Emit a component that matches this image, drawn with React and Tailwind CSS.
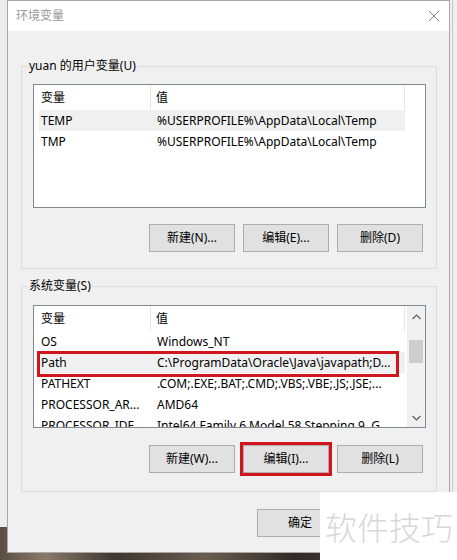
import React from "react";

const FONT = { fontFamily: '"Noto Sans", "Noto Sans CJK SC", sans-serif' };

function Btn({ children, className = "" }) {
  return (
    <div
      className={
        "w-[86px] h-[28px] flex items-center justify-center bg-[#e1e1e1] border border-[#adadad] text-[12px] text-black " +
        className
      }
    >
      {children}
    </div>
  );
}

function Header() {
  return (
    <div className="flex h-[25px] w-[371px] bg-white border-r border-[#e5e5e5] text-[12px] text-black">
      <div className="w-[117px] pl-[7px] flex items-center border-r border-[#e5e5e5]">变量</div>
      <div className="flex-1 pl-[5px] flex items-center">值</div>
    </div>
  );
}

function Row({ name, value, selected }) {
  return (
    <div
      className={
        "flex h-[21px] w-[366px] ml-[5px] items-center text-[12px] text-black whitespace-nowrap overflow-hidden " +
        (selected ? "bg-[#f0f0f0]" : "")
      }
    >
      <div className="w-[118px] pl-[2px] overflow-hidden">{name}</div>
      <div className="flex-1 overflow-hidden">{value}</div>
    </div>
  );
}

function ChevronUp() {
  return (
    <svg width="9" height="6" viewBox="0 0 9 6">
      <path d="M0.5 5 L4.5 1 L8.5 5" fill="none" stroke="#606060" strokeWidth="1.2" />
    </svg>
  );
}
function ChevronDown() {
  return (
    <svg width="9" height="6" viewBox="0 0 9 6">
      <path d="M0.5 1 L4.5 5 L8.5 1" fill="none" stroke="#606060" strokeWidth="1.2" />
    </svg>
  );
}

export default function App() {
  return (
    <div className="relative w-[457px] h-[560px] overflow-hidden bg-[#ececec]" style={FONT}>
      {/* desktop photo strip at bottom */}
      <div className="absolute left-0 right-0 top-[527px] bottom-0 bg-[linear-gradient(90deg,#5a4d43_0%,#8a7a6a_10%,#3e3630_25%,#6b5d50_45%,#2f2a26_65%,#544a40_85%,#3a332d_100%)]" />
      {/* window behind on the right */}
      <div className="absolute left-[449px] right-0 top-0 h-[491px] bg-[#f0f0f0] border-l border-[#d0d0d0]">
        <div className="ml-[2px] w-[1px] h-full bg-[#c8c8c8]" />
      </div>

      {/* dialog window */}
      <div className="absolute left-[7px] top-0 w-[443px] h-[553px] border border-[#a8a8a8] bg-[#f0f0f0] flex flex-col">
        <div className="h-[30px] bg-white flex items-center justify-between pl-[8px] pr-[9px] shrink-0">
          <span className="text-[12px] text-[#9a9a9a]">环境变量</span>
          <svg width="12" height="12" viewBox="0 0 12 12">
            <path d="M1 1 L11 11 M11 1 L1 11" stroke="#8a8a8a" strokeWidth="1" />
          </svg>
        </div>

        {/* user variables */}
        <fieldset className="mt-[27px] ml-[13px] w-[416px] border border-[#dcdcdc] pb-[16px]">
          <legend className="ml-[6px] px-[1px] text-[12px] leading-[16px] text-black">yuan 的用户变量(U)</legend>
          <div className="ml-[11px] mt-[10px] w-[393px] h-[124px] border border-[#828790] bg-white">
            <Header />
            <Row name="TEMP" value="%USERPROFILE%\AppData\Local\Temp" selected />
            <Row name="TMP" value="%USERPROFILE%\AppData\Local\Temp" />
          </div>
          <div className="mt-[16px] ml-[127px] flex gap-[8px]">
            <Btn>新建(N)...</Btn>
            <Btn>编辑(E)...</Btn>
            <Btn>删除(D)</Btn>
          </div>
        </fieldset>

        {/* system variables */}
        <fieldset className="mt-[9px] ml-[13px] w-[416px] border border-[#dcdcdc] pb-[18px]">
          <legend className="ml-[6px] px-[1px] text-[12px] leading-[16px] text-black">系统变量(S)</legend>
          <div className="relative ml-[11px] mt-[11px] w-[393px] h-[123px] border border-[#828790] bg-white flex overflow-hidden">
            <div className="w-[373px]">
              <Header />
              <Row name="OS" value="Windows_NT" />
              <Row name="Path" value="C:\ProgramData\Oracle\Java\javapath;D..." selected />
              <Row name="PATHEXT" value=".COM;.EXE;.BAT;.CMD;.VBS;.VBE;.JS;.JSE;..." />
              <Row name="PROCESSOR_AR..." value="AMD64" />
              <Row name="PROCESSOR_IDE..." value="Intel64 Family 6 Model 58 Stepping 9, G..." />
            </div>
            <div className="w-[18px] h-full bg-[#f0f0f0] flex flex-col items-center">
              <div className="h-[18px] flex items-center justify-center mt-[2px]">
                <ChevronUp />
              </div>
              <div className="mt-[14px] w-[14px] h-[23px] bg-[#cdcdcd]" />
              <div className="flex-1" />
              <div className="h-[18px] flex items-center justify-center">
                <ChevronDown />
              </div>
            </div>
            <div className="absolute left-[3px] top-[45px] w-[362px] h-[26px] border-[3px] border-[#d2141c]" />
          </div>
          <div className="mt-[17px] ml-[127px] flex gap-[8px]">
            <Btn>新建(W)...</Btn>
            <Btn className="outline-[3px] outline-solid outline-[#d2141c]">编辑(I)...</Btn>
            <Btn>删除(L)</Btn>
          </div>
        </fieldset>

        <div className="mt-[17px] flex justify-end gap-[9px] pr-[11px]">
          <Btn>确定</Btn>
          <Btn />
        </div>
      </div>

      {/* watermark */}
      <div className="absolute left-[320px] top-[492px] right-0 bottom-0 bg-white flex items-center pl-[5px]">
        <span className="text-[32px] leading-none font-light text-[#d8d8d8]" style={{ fontFamily: '"Noto Sans CJK SC", sans-serif' }}>
          软件技巧
        </span>
      </div>
    </div>
  );
}
